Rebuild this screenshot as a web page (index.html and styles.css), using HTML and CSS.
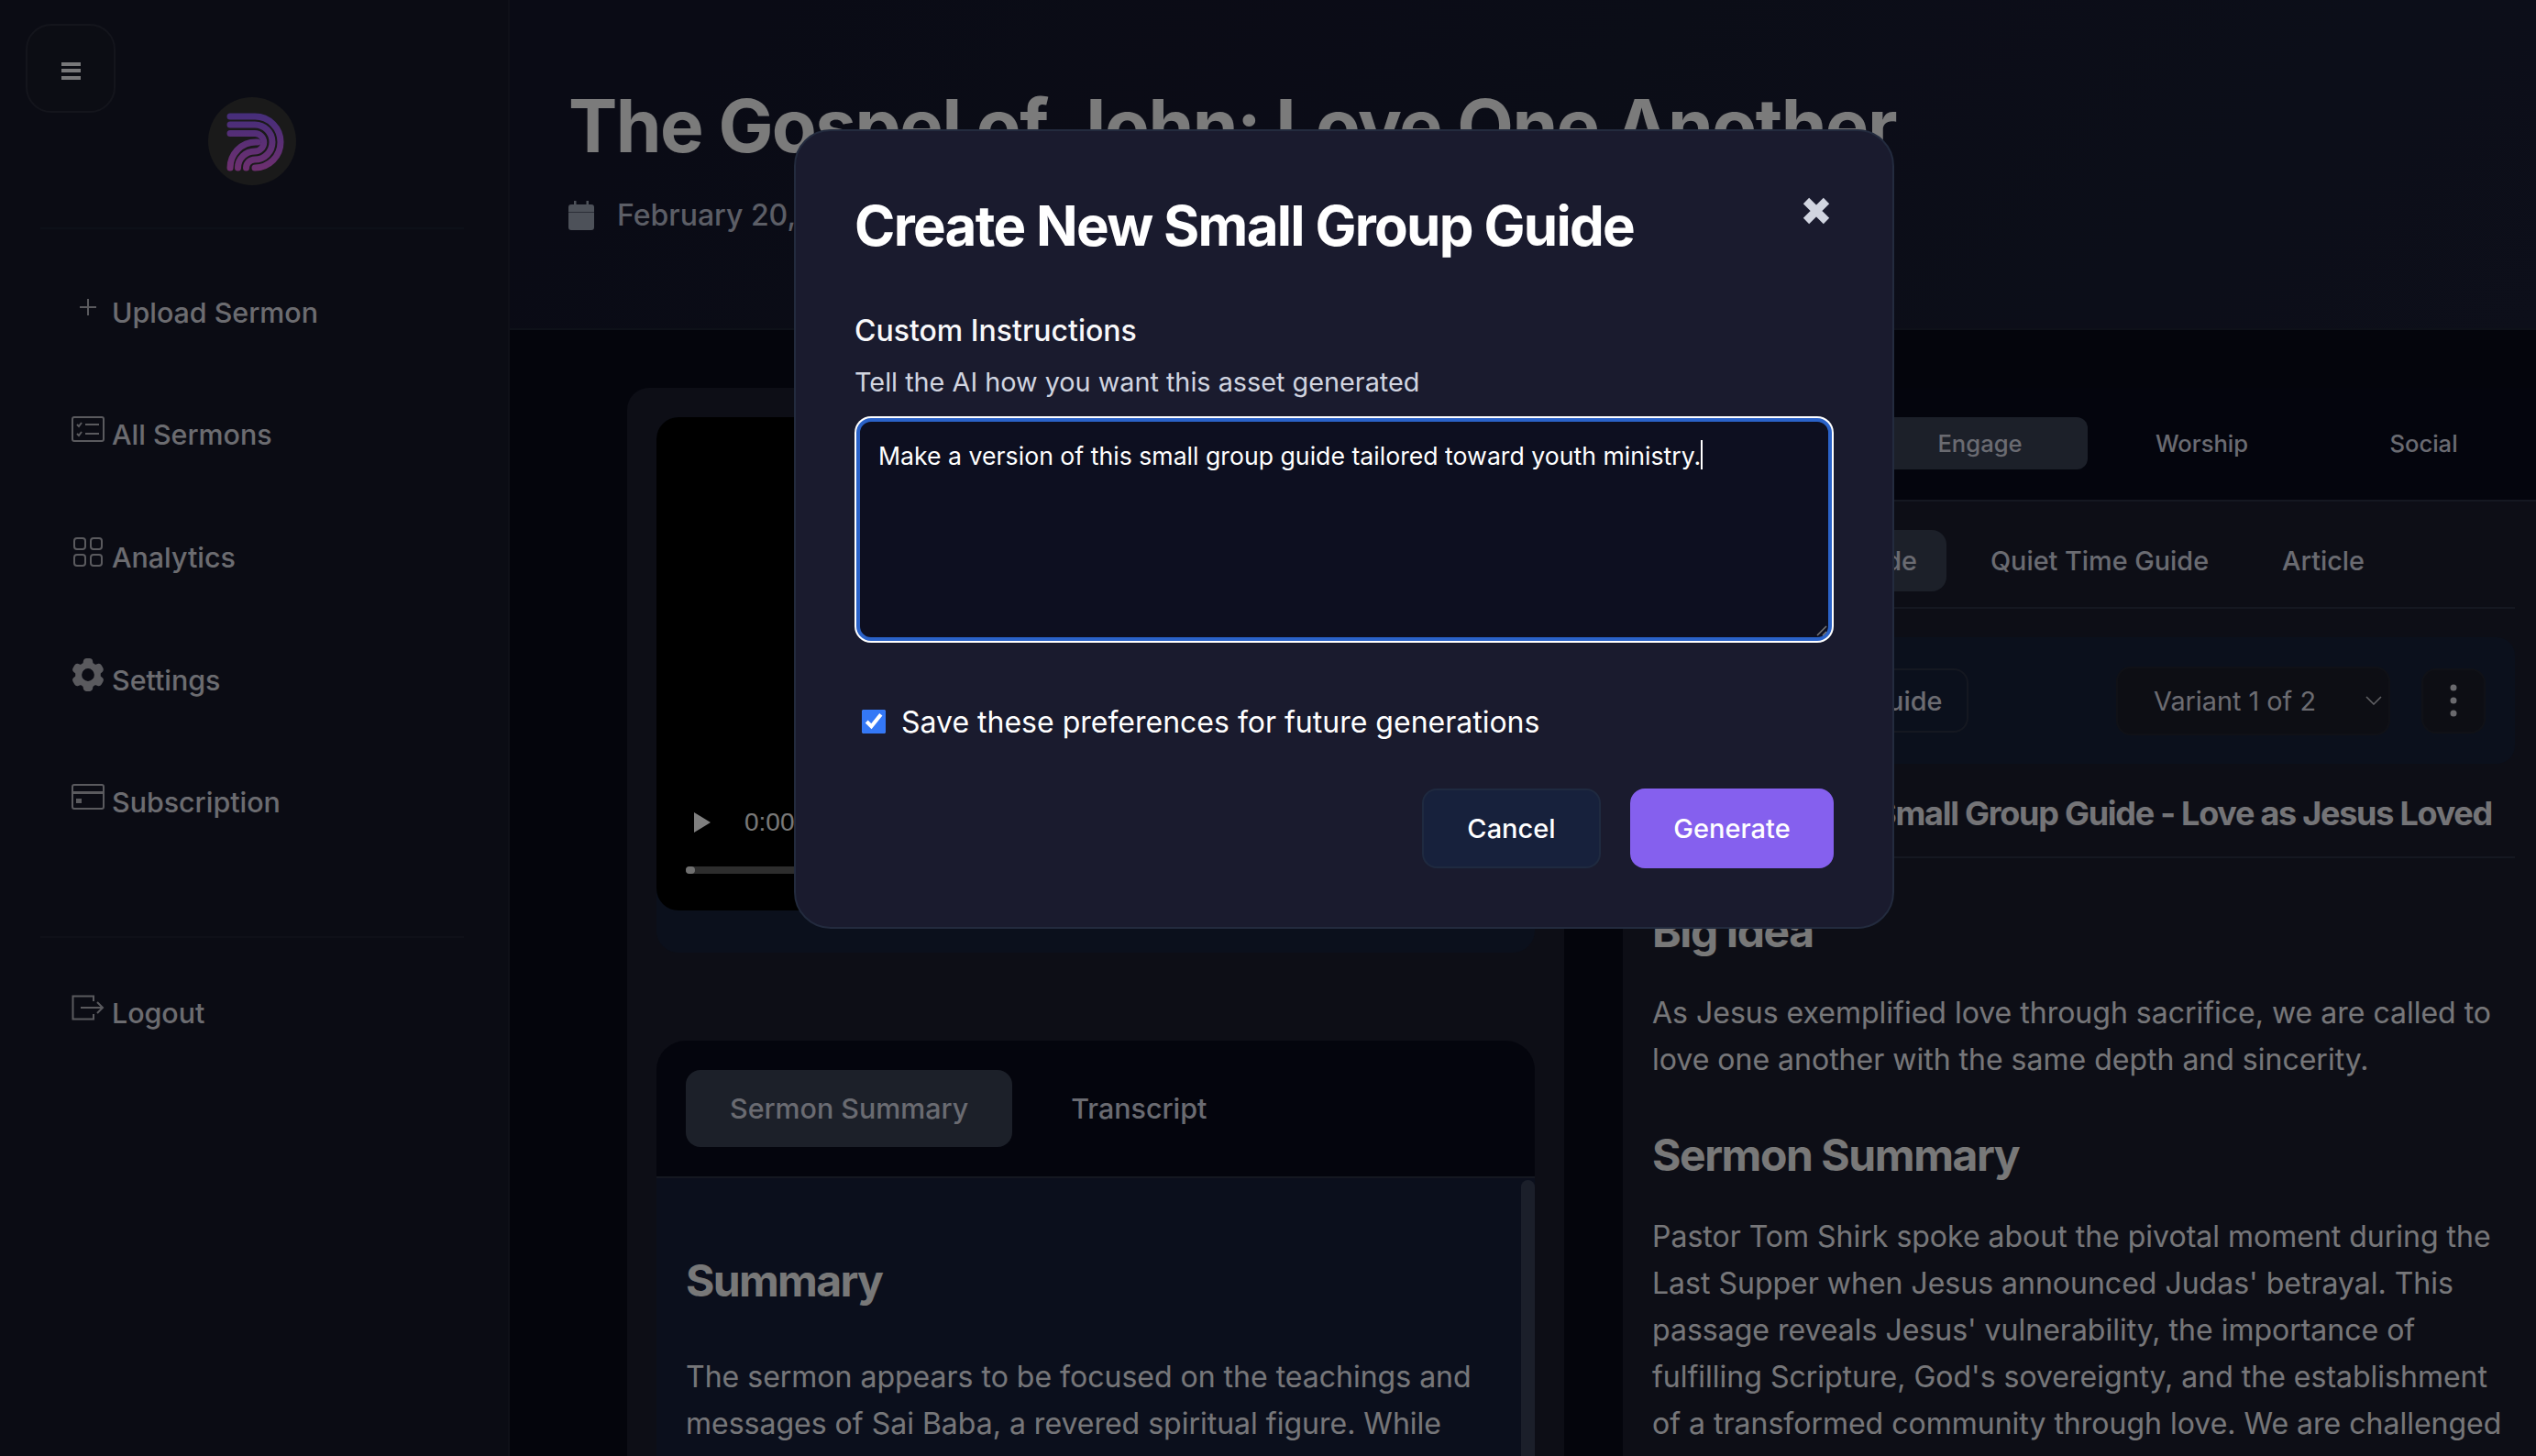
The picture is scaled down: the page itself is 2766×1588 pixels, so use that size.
FILE: index.html
```html
<!DOCTYPE html>
<html lang="en">
<head>
    <meta charset="UTF-8">
    <meta name="viewport" content="width=device-width, initial-scale=1.0">
    <title>Create New Small Group Guide</title>
    <link rel="stylesheet" href="styles.css">
</head>
<body>

    <div class="app">
        <aside class="sidebar">
            <button class="menu-btn" aria-label="Menu">
                <span></span><span></span><span></span>
            </button>

            <div class="logo">
                <svg width="96" height="96" viewBox="227 106 96 96">
                    <defs>
                        <linearGradient id="logoGrad" gradientUnits="userSpaceOnUse" x1="0" y1="123" x2="0" y2="186">
                            <stop offset="0" stop-color="#8b5cf6"/>
                            <stop offset="1" stop-color="#dc5fdf"/>
                        </linearGradient>
                    </defs>
                    <g fill="none" stroke="url(#logoGrad)" stroke-width="7" stroke-linecap="round">
                        <path d="M251 127H278A28 28 0 0 1 278 183"/>
                        <path d="M251 136H278A19 19 0 0 1 278 174A9.5 9 0 0 0 268.5 183"/>
                        <path d="M251 145.500H278A9.500 9.500 0 0 1 278 165A18.500 18 0 0 0 259.500 183"/>
                        <path d="M281 155H279A28 28 0 0 0 251 183"/>
                    </g>
                </svg>
            </div>

            <nav class="nav">
                <a class="nav-item">
                    <svg class="nav-icon" width="36" height="28" viewBox="0 0 36 28"><path d="M18 5v18M9 14h18"/></svg>
                    Upload Sermon
                </a>
                <a class="nav-item">
                    <svg class="nav-icon" width="36" height="28" viewBox="0 0 36 28"><rect x="1" y="1" width="34" height="26" rx="2"/><path d="M6 9l2 2 3-4M6 19l2 2 3-4M15 9h15M15 19h15"/></svg>
                    All Sermons
                </a>
                <a class="nav-item">
                    <svg class="nav-icon" width="36" height="32" viewBox="0 0 36 32"><rect x="3" y="1" width="12" height="12" rx="3"/><rect x="21" y="1" width="12" height="12" rx="3"/><rect x="3" y="19" width="12" height="12" rx="3"/><rect x="21" y="19" width="12" height="12" rx="3"/></svg>
                    Analytics
                </a>
                <a class="nav-item">
                    <svg class="nav-icon gear" width="36" height="36" viewBox="2.500 2.200 19 19.600"><path fill-rule="evenodd" d="M11.078 2.250c-.917 0-1.699.663-1.850 1.567L9.050 4.889c-.020.120-.115.260-.297.348a7.493 7.493 0 00-.986.570c-.166.115-.334.126-.450.083L6.300 5.508a1.875 1.875 0 00-2.282.819l-.922 1.597a1.875 1.875 0 00.432 2.385l.840.692c.095.078.170.229.154.430a7.598 7.598 0 000 1.139c.015.200-.059.352-.153.430l-.841.692a1.875 1.875 0 00-.432 2.385l.922 1.597a1.875 1.875 0 002.282.818l1.019-.382c.115-.043.283-.031.450.082.312.214.641.405.985.570.182.088.277.228.297.350l.178 1.071c.151.904.933 1.567 1.850 1.567h1.844c.916 0 1.699-.663 1.850-1.567l.178-1.072c.020-.120.114-.260.297-.349.344-.165.673-.356.985-.570.167-.114.335-.125.450-.082l1.020.382a1.875 1.875 0 002.280-.819l.923-1.597a1.875 1.875 0 00-.432-2.385l-.840-.692c-.095-.078-.170-.229-.154-.430a7.614 7.614 0 000-1.139c-.016-.200.059-.352.153-.430l.840-.692c.708-.582.891-1.590.433-2.385l-.922-1.597a1.875 1.875 0 00-2.282-.818l-1.020.382c-.114.043-.282.031-.449-.083a7.490 7.490 0 00-.985-.570c-.183-.087-.277-.227-.297-.348l-.179-1.072a1.875 1.875 0 00-1.850-1.567h-1.843zM12 15.750a3.750 3.750 0 100-7.500 3.750 3.750 0 000 7.500z"/></svg>
                    Settings
                </a>
                <a class="nav-item">
                    <svg class="nav-icon" width="36" height="28" viewBox="0 0 36 28"><rect x="1" y="1" width="34" height="26" rx="2"/><path d="M1 9.500h34" stroke-width="3"/><rect class="chip" x="5" y="16" width="6" height="5"/></svg>
                    Subscription
                </a>
                <div class="nav-divider"></div>
                <a class="nav-item logout">
                    <svg class="nav-icon" width="36" height="28" viewBox="0 0 36 28"><path d="M24 7V1.500H1.500V26.500H24V21M10 14H34M28 8l6 6-6 6"/></svg>
                    Logout
                </a>
            </nav>
        </aside>

        <main class="main">
            <header class="page-header">
                <h1>The Gospel of John: Love One Another</h1>
                <div class="page-date">
                    <svg width="28" height="32" viewBox="0 0 28 32"><path d="M6 0h2.500v4h11V0H22v4h3a3 3 0 013 3v5H0V7a3 3 0 013-3h3zM0 12.500h28V29a3 3 0 01-3 3H3a3 3 0 01-3-3z"/></svg>
                    <span>February 20, 2025</span>
                </div>
            </header>

            <div class="content">
                <section class="left-panel">
                    <div class="video-wrap">
                        <div class="video">
                            <div class="video-bar">
                                <span class="play"></span>
                                <span class="time">0:00</span>
                            </div>
                            <div class="progress"><span></span></div>
                        </div>
                    </div>

                    <div class="summary-card">
                        <div class="summary-tabs">
                            <span class="tab tab-lg active">Sermon Summary</span>
                            <span class="tab tab-lg">Transcript</span>
                        </div>
                        <div class="summary-body">
                            <h2>Summary</h2>
                            <p>The sermon appears to be focused on the teachings and messages of Sai Baba, a revered spiritual figure. While</p>
                            <div class="scroll-thumb"></div>
                        </div>
                    </div>
                </section>

                <section class="right-panel">
                    <div class="asset-tabs">
                        <span class="tab"></span>
                        <span class="tab active">Engage</span>
                        <span class="tab">Worship</span>
                        <span class="tab">Social</span>
                    </div>

                    <div class="doc">
                        <div class="sub-tabs">
                            <span class="tab tab-sub active">Small Group Guide</span>
                            <span class="tab tab-sub">Quiet Time Guide</span>
                            <span class="tab tab-sub">Article</span>
                        </div>

                        <div class="toolbar">
                            <button class="outline-btn">Small Group Guide</button>
                            <div class="variant">
                                Variant 1 of 2
                                <svg width="18" height="10" viewBox="0 0 18 10"><path d="M1 1l8 8 8-8"/></svg>
                            </div>
                            <button class="kebab" aria-label="More">
                                <svg width="8" height="36" viewBox="0 0 8 36"><circle cx="4" cy="4" r="3.500"/><circle cx="4" cy="18" r="3.500"/><circle cx="4" cy="32" r="3.500"/></svg>
                            </button>
                        </div>

                        <div class="doc-title">Small Group Guide - Love as Jesus Loved</div>

                        <article class="doc-body">
                            <h2>Big Idea</h2>
                            <p>As Jesus exemplified love through sacrifice, we are called to love one another with the same depth and sincerity.</p>
                            <h2>Sermon Summary</h2>
                            <p>Pastor Tom Shirk spoke about the pivotal moment during the Last Supper when Jesus announced Judas' betrayal. This passage reveals Jesus' vulnerability, the importance of fulfilling Scripture, God's sovereignty, and the establishment of a transformed community through love. We are challenged</p>
                        </article>
                    </div>
                </section>
            </div>
        </main>
    </div>

    <!-- modal over a dimmed page -->
    <div class="overlay">
        <div class="modal">
            <button class="close-btn" aria-label="Close">
                <svg width="30" height="30" viewBox="0 0 30 30"><path d="M4 4l22 22M26 4L4 26"/></svg>
            </button>
            <h2 class="modal-title">Create New Small Group Guide</h2>
            <div class="field-label">Custom Instructions</div>
            <div class="field-hint">Tell the AI how you want this asset generated</div>
            <div class="textbox">
                <span>Make a version of this small group guide tailored toward youth ministry.</span><span class="caret"></span>
                <svg class="grip" width="12" height="12" viewBox="0 0 12 12"><path d="M11 1L1 11M11 7l-4 4"/></svg>
            </div>
            <label class="save-row">
                <input type="checkbox" checked>
                Save these preferences for future generations
            </label>
            <div class="modal-actions">
                <button class="btn btn-cancel">Cancel</button>
                <button class="btn btn-generate">Generate</button>
            </div>
        </div>
    </div>

</body>
</html>
```

FILE: styles.css
```css
* {
    box-sizing: border-box;
}
html, body {
    margin: 0;
    padding: 0;
    height: 100%;
    overflow: hidden;
}
body {
    font-family: Inter, "Noto Sans", sans-serif;
    background-color: #080a18;
    color: #f6f6f8;
}
button {
    font-family: inherit;
    cursor: pointer;
}
h1, h2, p {
    margin: 0;
}

.app {
    display: flex;
    height: 1588px;
}

/* sidebar */
.sidebar {
    position: relative;
    flex: 0 0 556px;
    padding: 106px 48px 0 44px;
    background: #161829;
    border-right: 2px solid #1f2130;
}
.menu-btn {
    position: absolute;
    top: 26px;
    left: 28px;
    width: 98px;
    height: 97px;
    display: flex;
    flex-direction: column;
    align-items: center;
    justify-content: center;
    gap: 3.500px;
    padding: 5px 0 0;
    background: #181a28;
    border: 2px solid #282a38;
    border-radius: 28px;
}
.menu-btn span {
    width: 21px;
    height: 4px;
    background: #f0f0f4;
}
.logo {
    width: 96px;
    height: 96px;
    margin: 0 auto 46px;
    border-radius: 50%;
    background: #343434;
}
.logo svg {
    display: block;
}
.nav {
    border-top: 2px solid #1a2030;
    padding-top: 24px;
}
.nav-item {
    display: flex;
    align-items: center;
    gap: 8px;
    height: 133.600px;
    padding-left: 34px;
    font-size: 30.400px;
    font-weight: 500;
    color: #d8d8e0;
}
.nav-icon {
    flex: none;
    margin-bottom: 12px;
    fill: none;
    stroke: #b4b4bc;
    stroke-width: 2;
}
.nav-icon .chip {
    fill: #b4b4bc;
    stroke: none;
}
.nav-icon.gear {
    fill: #b4b4bc;
    stroke: none;
}
.nav-divider {
    height: 2px;
    margin-top: 79px;
    background: #1e2030;
}
.logout {
    margin-top: 15px;
}

/* main column */
.main {
    flex: 1;
    min-width: 0;
    display: flex;
    flex-direction: column;
}
.page-header {
    flex: 0 0 360px;
    padding: 89px 0 0 64px;
    background: linear-gradient(135deg, #14162a, #1a1e34);
    border-bottom: 2px solid #1c2232;
}
.page-header h1 {
    font-size: 80px;
    line-height: 96px;
    font-weight: 700;
    letter-spacing: -0.020em;
    white-space: nowrap;
    color: #f6f6f6;
}
.page-date {
    display: flex;
    align-items: center;
    gap: 25px;
    margin-top: 30px;
    font-size: 32px;
    font-weight: 500;
    color: #b8bccc;
}
.page-date svg {
    fill: #9aa2b2;
}

.content {
    flex: 1;
    min-height: 0;
    display: flex;
    gap: 64px;
    padding: 63px 0 0 128px;
    overflow: hidden;
}

/* left */
.left-panel {
    flex: 0 0 1022px;
    padding: 32px 32px 0;
    background: #1a1c2c;
    border-radius: 24px 24px 0 0;
}
.video-wrap {
    height: 584px;
    background: #162038;
    border-radius: 24px;
}
.video {
    height: 538px;
    padding: 431px 32px 0;
    background: #000;
    border-radius: 24px;
}
.video-bar {
    display: flex;
    align-items: center;
    gap: 37px;
    height: 22px;
    padding-left: 9px;
}
.play {
    width: 0;
    height: 0;
    border-left: 18px solid #fff;
    border-top: 11px solid transparent;
    border-bottom: 11px solid transparent;
}
.time {
    font-family: "Liberation Sans", Arial, sans-serif;
    font-size: 28px;
    color: #f0f0f0;
}
.progress {
    height: 8px;
    margin-top: 37px;
    border-radius: 4px;
    background: #5a5a5a;
}
.progress span {
    display: block;
    width: 10px;
    height: 8px;
    border-radius: 4px;
    background: #e0e0e0;
}
.summary-card {
    margin-top: 96px;
    height: 460px;
    border-radius: 32px 32px 0 0;
    overflow: hidden;
}
.summary-tabs {
    display: flex;
    gap: 16px;
    height: 150px;
    padding: 32px;
    background: #080a1a;
    border-bottom: 2px solid #2a3042;
}
.summary-body {
    position: relative;
    height: 310px;
    padding: 79px 48px 0 32px;
    background: #161e38;
}
.summary-body h2 {
    font-size: 48px;
    line-height: 66px;
    font-weight: 700;
    letter-spacing: -0.035em;
    color: #f0f0f0;
}
.summary-body p {
    margin-top: 46px;
    font-size: 32px;
    line-height: 51px;
    color: #ecedf2;
}
.scroll-thumb {
    position: absolute;
    top: 2px;
    right: 0;
    width: 15px;
    height: 320px;
    border-radius: 8px;
    background: #363e54;
}

.tab {
    display: flex;
    align-items: center;
    justify-content: center;
    border-radius: 12px;
    font-size: 25.600px;
    font-weight: 500;
    color: #d4d6e2;
    white-space: nowrap;
}
.tab.active {
    background: #384052;
}
.tab-lg {
    padding: 0 48px;
    font-size: 30.400px;
    border-radius: 16px;
}

/* right */
.right-panel {
    flex: 1;
    min-width: 0;
    background: #1a1c2c;
    display: flex;
    flex-direction: column;
}
.asset-tabs {
    display: grid;
    grid-template-columns: repeat(4, 238px);
    gap: 4px;
    height: 124px;
    padding: 32px 0 33px 27px;
    background: #080a1a;
    border-bottom: 2px solid #2a3042;
}
.asset-tabs .tab {
    padding-left: 3px;
}
.doc {
    flex: 1;
    min-height: 0;
    padding: 0 23px 0 32px;
}
.sub-tabs {
    display: flex;
    justify-content: flex-end;
    gap: 16px;
    height: 117px;
    padding: 31px 132px 17px 0;
    border-bottom: 2px solid #2a3042;
}
.tab-sub {
    padding: 0 32px;
    font-size: 28.800px;
    border-radius: 16px;
}
.toolbar {
    display: flex;
    align-items: center;
    gap: 34px;
    height: 138px;
    margin-top: 31px;
    padding: 0 32px;
    background: #162038;
    border-radius: 20px;
}
.outline-btn {
    width: 313px;
    height: 70px;
    margin-right: auto;
    padding: 0;
    background: transparent;
    border: 2px solid #2a3042;
    border-radius: 16px;
    font-size: 28.800px;
    font-weight: 500;
    color: #d8d8e2;
}
.variant {
    display: flex;
    align-items: center;
    justify-content: space-between;
    width: 299px;
    height: 75px;
    padding: 0 7px 0 39px;
    background: #1a1c28;
    border: 2px solid #20232f;
    border-radius: 16px;
    font-size: 28.800px;
    color: #d8d8e2;
}
.variant svg {
    fill: none;
    stroke: #c4c4cc;
    stroke-width: 1.500;
}
.kebab {
    display: flex;
    align-items: center;
    justify-content: center;
    width: 70px;
    height: 71px;
    padding: 0;
    background: #1a1c28;
    border: 2px solid #20232f;
    border-radius: 16px;
}
.kebab svg {
    fill: #d4d4dc;
}
.doc-title {
    display: flex;
    justify-content: flex-end;
    align-items: center;
    height: 103px;
    padding: 6px 25px 0 0;
    border-bottom: 2px solid #2a3042;
    font-size: 36px;
    font-weight: 700;
    letter-spacing: -0.035em;
    white-space: nowrap;
    color: #e8e8ee;
}
.doc-body {
    padding-top: 50px;
    color: #ecedf2;
}
.doc-body h2 {
    font-size: 48px;
    line-height: 60px;
    font-weight: 700;
    letter-spacing: -0.030em;
    color: #f0f0f0;
}
.doc-body p {
    margin: 33px 0 49px;
    font-size: 32px;
    line-height: 51px;
}

/* modal */
.overlay {
    position: fixed;
    inset: 0;
    padding: 141px 0 0 866px;
    background: rgba(0, 0, 0, 0.5);
}
.modal {
    position: relative;
    width: 1200px;
    height: 872px;
    padding: 67px 64px 0;
    background: #1a1b2e;
    border: 2px solid #232b3e;
    border-radius: 40px;
}
.close-btn {
    position: absolute;
    top: 72px;
    right: 68px;
    padding: 0;
    line-height: 0;
    background: none;
    border: none;
}
.close-btn svg {
    fill: none;
    stroke: #d1d5e0;
    stroke-width: 9;
}
.modal-title {
    font-size: 60px;
    line-height: 72px;
    font-weight: 700;
    letter-spacing: -1.700px;
    color: #fff;
}
.field-label {
    margin-top: 59px;
    font-size: 32px;
    line-height: 40px;
    font-weight: 500;
    color: #f8f8fa;
}
.field-hint {
    margin-top: 16px;
    font-size: 28.800px;
    line-height: 40px;
    color: #d1d5e0;
}
.textbox {
    position: relative;
    height: 243px;
    margin: 19px 2px 0;
    padding: 20px 20px;
    background: #0d0f20;
    border: 4px solid #2a62c8;
    border-radius: 16px;
    box-shadow: 0 0 0 2px #fff;
    font-size: 26.670px;
    line-height: 34px;
    color: #fff;
}
.caret {
    display: inline-block;
    width: 2px;
    height: 32px;
    vertical-align: top;
    background: #fff;
}
.grip {
    position: absolute;
    right: 1px;
    bottom: 1px;
    fill: none;
    stroke: #777;
    stroke-width: 1.500;
}
.save-row {
    display: flex;
    align-items: center;
    gap: 17px;
    height: 40px;
    margin-top: 68px;
    padding-left: 8px;
    font-size: 32px;
    color: #fff;
}
.save-row input {
    width: 26px;
    height: 26px;
    margin: 0;
    accent-color: #3478f6;
}
.modal-actions {
    display: flex;
    justify-content: flex-end;
    gap: 32px;
    margin-top: 53px;
}
.btn {
    height: 87px;
    border-radius: 16px;
    font-size: 29px;
    font-weight: 500;
    color: #fff;
}
.btn-cancel {
    width: 195px;
    background: #17213c;
    border: 2px solid #1f2a40;
}
.btn-generate {
    width: 222px;
    background: #8560ee;
    border: none;
}
```
